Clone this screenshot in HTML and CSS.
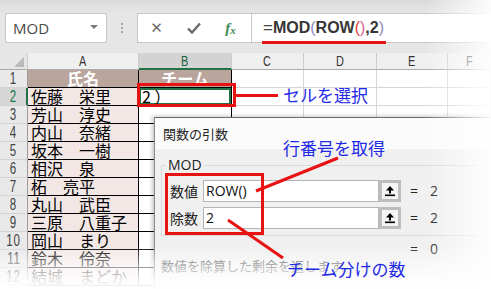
FILE: index.html
```html
<!DOCTYPE html>
<html lang="ja">
<head>
<meta charset="utf-8">
<link rel="stylesheet" href="styles.css">
</head>
<body>
<div class="app">
  <div class="topbar"></div>
  <div class="fbar">
    <div class="namebox"><span>MOD</span><span class="caret"></span></div>
    <div class="dots"><i></i><i></i><i></i></div>
    <div class="btns">
      <span class="btn x">✕</span>
      <span class="btn ok"><svg width="14" height="12" viewBox="0 0 14 12"><path d="M1 6.5 L5 10.5 L13 1.5" fill="none" stroke="#6b6b6b" stroke-width="2.4"/></svg></span>
      <span class="btn fx"><i>f</i><i class="sub">x</i></span>
    </div>
    <div class="formula"><span class="eq">=</span><b>MOD</b><span class="p1">(</span><b>ROW</b><span class="p2">(</span><span class="p3">)</span><b>,2</b><span class="p1">)</span></div>
  </div>
  <div class="gap"></div>
  <div class="sheet">
    <div class="ch corner"></div><div class="ch"><span>A</span></div><div class="ch sel"><span>B</span></div><div class="ch"><span>C</span></div><div class="ch"><span>D</span></div><div class="ch"><span>E</span></div><div class="ch"><span>F</span></div>

    <div class="rh"><span>1</span></div><div class="t a hd">氏名</div><div class="t hd">チーム</div><div class="c"></div><div class="c"></div><div class="c"></div><div class="c"></div>
    <div class="rh sel"><span>2</span></div><div class="t a">佐藤　栄里</div><div class="t b2">2 ）</div><div class="c"></div><div class="c"></div><div class="c"></div><div class="c"></div>
    <div class="rh"><span>3</span></div><div class="t a">芳山　淳史</div><div class="t"></div><div class="c"></div><div class="c"></div><div class="c"></div><div class="c"></div>
    <div class="rh"><span>4</span></div><div class="t a">内山　奈緒</div><div class="t"></div><div class="c"></div><div class="c"></div><div class="c"></div><div class="c"></div>
    <div class="rh"><span>5</span></div><div class="t a">坂本　一樹</div><div class="t"></div><div class="c"></div><div class="c"></div><div class="c"></div><div class="c"></div>
    <div class="rh"><span>6</span></div><div class="t a">相沢　泉</div><div class="t"></div><div class="c"></div><div class="c"></div><div class="c"></div><div class="c"></div>
    <div class="rh"><span>7</span></div><div class="t a">柘　亮平</div><div class="t"></div><div class="c"></div><div class="c"></div><div class="c"></div><div class="c"></div>
    <div class="rh"><span>8</span></div><div class="t a">丸山　武臣</div><div class="t"></div><div class="c"></div><div class="c"></div><div class="c"></div><div class="c"></div>
    <div class="rh"><span>9</span></div><div class="t a">三原　八重子</div><div class="t"></div><div class="c"></div><div class="c"></div><div class="c"></div><div class="c"></div>
    <div class="rh"><span>10</span></div><div class="t a">岡山　まり</div><div class="t"></div><div class="c"></div><div class="c"></div><div class="c"></div><div class="c"></div>
    <div class="rh"><span>11</span></div><div class="t a">鈴木　伶奈</div><div class="t"></div><div class="c"></div><div class="c"></div><div class="c"></div><div class="c"></div>
    <div class="rh"><span>12</span></div><div class="t a">結城　まどか</div><div class="t"></div><div class="c"></div><div class="c"></div><div class="c"></div><div class="c"></div>
  </div>
</div>

<div class="dlg">
  <div class="dlg-title">関数の引数</div>
  <div class="dlg-body">
    <div class="grp">
      <span class="legend">MOD</span>
      <div class="arg">
        <span class="lbl">数値</span>
        <span class="field">ROW()</span>
        <span class="cbtn"><svg width="12" height="12" viewBox="0 0 12 12"><path d="M6 1 L2 5.5 H10 Z" fill="#000"/><rect x="5" y="5" width="2" height="3.5" fill="#000"/><rect x="1" y="9.5" width="10" height="1.6" fill="#000"/></svg></span>
        <span class="eqs">=</span><span class="val">2</span>
      </div>
      <div class="arg">
        <span class="lbl">除数</span>
        <span class="field">2</span>
        <span class="cbtn"><svg width="12" height="12" viewBox="0 0 12 12"><path d="M6 1 L2 5.5 H10 Z" fill="#000"/><rect x="5" y="5" width="2" height="3.5" fill="#000"/><rect x="1" y="9.5" width="10" height="1.6" fill="#000"/></svg></span>
        <span class="eqs">=</span><span class="val">2</span>
      </div>
    </div>
    <div class="result"><span class="eqs">=</span><span class="val">0</span></div>
    <div class="desc">数値を除算した剰余を返します。</div>
  </div>
</div>

<div class="fade-r"></div>
<div class="fade-b"></div>

<svg class="anno" width="491" height="289" viewBox="0 0 491 289">
  <g fill="none" stroke="#e81212" stroke-width="3">
    <line x1="262" y1="42.5" x2="386" y2="42.5"/>
    <rect x="138.5" y="84.5" width="96" height="21"/>
    <line x1="235" y1="95.5" x2="278" y2="95.5"/>
    <rect x="166.5" y="174.5" width="96" height="59"/>
    <line x1="256" y1="191" x2="338" y2="158"/>
    <line x1="228" y1="220" x2="283" y2="258"/>
  </g>
</svg>
<div class="callout c1">セルを選択</div>
<div class="callout c2">行番号を取得</div>
<div class="callout c3">チーム分けの数</div>
</body>
</html>
```
FILE: styles.css
```css
* { box-sizing: border-box; margin: 0; padding: 0; }
body {
  width: 491px; height: 289px; overflow: hidden; position: relative;
  background: #fff;
  font-family: "Noto Sans", "Noto Sans CJK JP", sans-serif;
}
.app { width: 491px; height: 289px; overflow: hidden; }
.topbar { height: 13px; background: linear-gradient(#dadada, #e6e6e6); }
.fbar { height: 30px; display: flex; padding-left: 5px; background: #e6e6e6; }
.namebox {
  width: 102px; background: #fff; border: 1px solid #c6c6c6;
  display: flex; align-items: center; justify-content: space-between;
  padding: 0 8px 0 7px; font: 15px "Open Sans", sans-serif; color: #4a4a4a;
}
.caret { width: 0; height: 0; border-left: 4px solid transparent; border-right: 4px solid transparent; border-top: 4px solid #777; margin-top: -2px; }
.dots { width: 30px; display: flex; flex-direction: column; align-items: center; justify-content: center; gap: 2px; }
.dots i { width: 2px; height: 2px; background: #a8a8a8; display: block; }
.btns { width: 114px; background: #fff; border: 1px solid #c6c6c6; border-right: none; display: flex; align-items: center; }
.btn { width: 37px; text-align: center; display: flex; justify-content: center; align-items: center; }
.btn.x { font: 15px "DejaVu Sans", sans-serif; color: #6b6b6b; }
.btn.fx { font: italic bold 15px "Liberation Serif", serif; color: #3f8a52; }
.btn.fx .sub { font-size: 11px; margin-top: 4px; }
.formula {
  flex: 1; background: #fff; border: 1px solid #c6c6c6; border-right: none; padding-left: 11px;
  display: flex; align-items: center; font: 16px "Liberation Sans", sans-serif; color: #333;
}
.formula b { font-weight: bold; color: #363636; }
.formula .eq { color: #444; font-size: 17px; }
.formula .p1 { color: #8e88b8; }
.formula .p2 { color: #e03a3a; }
.formula .p3 { color: #e0609a; }
.gap { height: 10px; background: #e6e6e6; }

.sheet {
  display: grid;
  grid-template-columns: 28px 111px 93px 72px 73px 71px 43px;
  grid-template-rows: 17px repeat(12, 18px);
}
.ch {
  background: #efefef; border-right: 1px solid #cbcbcb; border-bottom: 1px solid #ababab;
  display: flex; justify-content: center; align-items: center;
  font: 14px "Liberation Sans", sans-serif; color: #333;
}
.ch span { display: inline-block; transform: scaleX(.78); }
.ch.sel { background: #d3d3d3; color: #1f5f3a; border-bottom: 2px solid #217346; }
.corner { position: relative; background: #e6e6e6; }
.corner::after {
  content: ""; position: absolute; right: 3px; bottom: 2px;
  border-left: 10px solid transparent; border-bottom: 10px solid #b9b9b9;
}
.rh {
  background: #e9e9e9; border-right: 1px solid #9c9c9c; border-bottom: 1px solid #d2d2d2;
  display: flex; justify-content: center; align-items: center;
  font: 17px "Liberation Sans", sans-serif; line-height: 17px; color: #444;
}
.rh span { display: inline-block; transform: scaleX(.68); letter-spacing: 1px; }
.rh.sel { background: #d6d6d6; color: #217346; border-right: 2px solid #217346; }
.c { border-right: 1px solid #d6d6d6; border-bottom: 1px solid #d6d6d6; }
.t {
  border-right: 1px solid #000; border-bottom: 1px solid #000;
  font: 16px "Noto Sans CJK JP", sans-serif; line-height: 17px; color: #000; white-space: pre;
}
.a { background: #f2e7e5; padding-left: 3px; }
.hd { background: #baa59d; color: #fff; font-weight: bold; text-align: center; padding-left: 0; }
.b2 { box-shadow: inset 0 0 0 2px #217346; padding-left: 3px; }

.dlg {
  position: absolute; left: 154px; top: 117px; width: 337px; height: 172px; overflow: hidden;
  background: #f0f0f0; border-left: 1px solid #8a8a8a; border-top: 1px solid #6e6e6e;
  box-shadow: -2px -1px 4px rgba(0,0,0,.22);
}
.dlg-title { height: 31px; background: #fbfbfb; padding-left: 8px; font: 13px "Noto Sans CJK JP", sans-serif; line-height: 31px; color: #222; }
.dlg-body { padding: 16px 0 0 6px; }
.grp { position: relative; border: 1px solid #d9d9d9; border-right: none; padding: 14px 0 6px 8px; display: flex; flex-direction: column; gap: 5px; }
.legend { position: absolute; left: 4px; top: -11px; padding: 0 2px; background: #f0f0f0; font: 14px "Open Sans", sans-serif; color: #222; line-height: 20px; }
.arg { display: flex; align-items: center; height: 22px; }
.lbl { width: 33px; font: 14px "Noto Sans CJK JP", sans-serif; line-height: 20px; color: #222; }
.field { width: 176px; height: 22px; background: #fff; border: 1px solid #b4b4b4; padding-left: 2px; font: 14px "Open Sans", sans-serif; line-height: 20px; color: #111; }
.cbtn { width: 22px; height: 22px; border: 3px solid #bdbdbd; background: #f4f4f4; display: flex; justify-content: center; align-items: center; }
.eqs { margin-left: 9px; width: 20px; font: 14px "Open Sans", sans-serif; line-height: 16px; color: #222; }
.val { font: 14px "Open Sans", sans-serif; line-height: 16px; color: #222; }
.result { display: flex; height: 16px; margin-top: 5px; padding-left: 240px; }
.desc { font: 13px "Noto Sans CJK JP", sans-serif; color: #444; line-height: 18px; white-space: nowrap; }

.fade-r { position: absolute; top: 0; right: 0; width: 66px; height: 289px; background: linear-gradient(to right, rgba(255,255,255,0), rgba(255,255,255,.93)); }
.fade-b { position: absolute; left: 0; bottom: 0; width: 491px; height: 44px; background: linear-gradient(rgba(255,255,255,0), rgba(255,255,255,.5) 40%, rgba(255,255,255,.9) 80%, rgba(255,255,255,.96)); }

.anno { position: absolute; left: 0; top: 0; }
.callout { position: absolute; font: 17px "Noto Sans CJK JP", sans-serif; line-height: 20px; color: #1f2ae6; white-space: nowrap; }
.c1 { left: 283px; top: 85px; }
.c2 { left: 283px; top: 138px; }
.c3 { left: 287px; top: 259px; }
```
